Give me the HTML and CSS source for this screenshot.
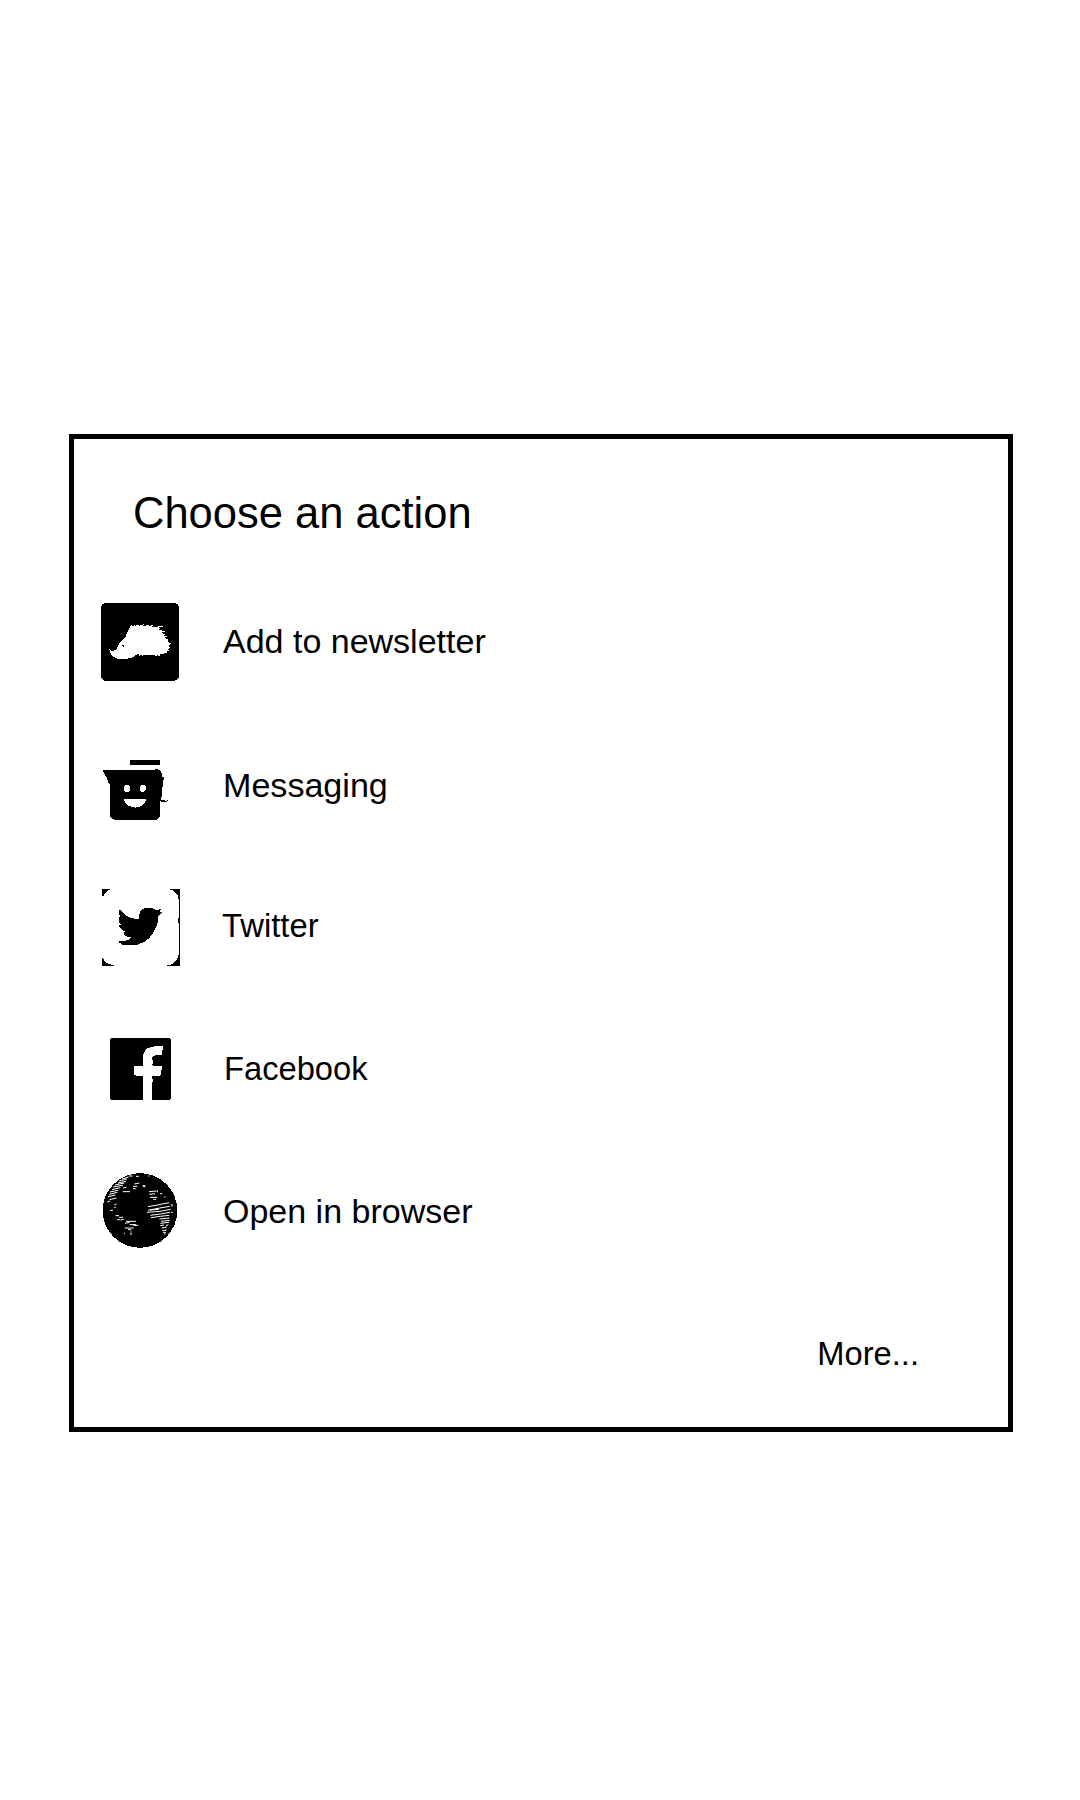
FILE: index.html
```html
<!DOCTYPE html>
<html lang="en">
<head>
<meta charset="utf-8">
<title>Choose an action</title>
<link rel="stylesheet" href="styles.css">
</head>
<body>
<main class="dialog">
  <h1 class="title">Choose an action</h1>
  <ul class="actions">
    <li class="action newsletter">
      <svg class="icon" viewBox="0 3 300 300" aria-hidden="true">
        <path d="M45 39H256L262 42L268 50V262L262 268L255 272H44L38 268L33 261V50L38 42Z"/>
        <path fill="#fff" d="M57 174L63 181L69 184L78 179L84 168L89 158L101 147L107 139L113 124L122 107L126 105L129 111L136 101V108L149 102L147 108L163 102L159 109L178 104L174 109L193 104L186 110L222 109L201 114L213 116L207 119L228 125L213 126L226 134L220 135L235 142L225 142L236 151L231 152L243 161L237 166L240 173L234 178L237 184L229 182L231 190L222 188L220 194L212 191L207 200L203 195L198 200L195 195H162L158 199L154 193L148 198L145 192L138 194L133 199L122 204L105 207H84L75 203L66 197L60 188Z"/>
        <path d="M96 166H102V171H99V168H96Z"/>
      </svg>
      <span>Add to newsletter</span>
    </li>
    <li class="action messaging">
      <svg class="icon" viewBox="0 -30 300 300" aria-hidden="true">
        <path d="M120 45H210V60H120ZM39 75H194V72H201L210 77L216 85V94L222 97V104L218 109L219 122L215 134L216 153L213 157V165H225V168L234 165V169L219 171L211 169L210 213L205 220L198 225H75L67 221L61 214V118L55 113L51 99L43 87Z"/>
        <path fill="#fff" d="M105 121H115L120 126V136L115 141H107L102 136V125ZM154 121H164L168 126V135L163 140H154L149 135V126ZM102 162H168L165 172L158 180L148 185H138V189H134V185H123L112 180L105 173Z"/>
      </svg>
      <span>Messaging</span>
    </li>
    <li class="action twitter">
      <svg class="icon" viewBox="0 3 300 300" aria-hidden="true">
        <path d="M36 42H64L54 46L46 53L40 64H36ZM237 42H270V272H228L241 269L251 265L259 257L264 246L267 234V144H264V129H267V78L264 63L257 53L248 46ZM36 246L42 255L48 262L55 267L72 270V272H36Z"/>
        <path d="M87 104L93 107L101 115L112 124L124 129L143 133H147V119L152 108L160 101L169 98H182L192 101L199 106L213 102L211 108L208 111L216 112L213 117L205 122L203 141L198 157L190 173L178 189L163 201L144 207L142 210H96V207L87 202V198H102L118 193L124 187L107 184L100 174L105 170L95 164L86 153L87 149H94L88 142L86 135V126L91 124L87 117Z"/>
      </svg>
      <span>Twitter</span>
    </li>
    <li class="action facebook">
      <svg class="icon" viewBox="0 -3 300 300" aria-hidden="true">
        <path d="M63 54H237L243 60V234L237 240H186V186H189V177H186V168H210V165H213V150H216V138H189V135H186V132H189V120H186V114L191 108L198 105H216V90H219V78H198L183 81L171 86L164 94L160 104L159 138H132V165H138V168H159V240H64L60 234V58Z"/>
      </svg>
      <span>Facebook</span>
    </li>
    <li class="action browser">
      <svg class="icon" viewBox="0 3 300 300" aria-hidden="true">
        <circle cx="150" cy="151.500" r="112"/>
        <path class="lines" d="M96 57L116 51M87 63L111 57M84 69L108 64M75 75L103 69M69 81L99 76M66 89L91 83M60 96L84 91M58 103L82 97M54 110L76 105M58 119L79 114M52 126L60 123M117 48H128M138 49H147M174 48H178M133 72L148 69M129 79H142M129 86H137M99 84L109 82M98 95H120M158 77H166M159 80H166M177 95L200 93M202 91V97M178 103L195 101M210 101H217M180 112L202 112M190 118H198M222 111H226M73 134L80 132M60 151H69M73 143L78 141M76 167H87M87 172H99M81 179H91M92 180L101 178M108 184H138M105 190L119 187M119 194H138M130 196H145M104 204H131M114 209H124M102 220H105M119 222H126M121 216H125M174 140L202 135L237 128M174 151L204 145L239 139M180 150L207 148M171 157L210 154L242 148M181 166L211 162L240 157M183 173L211 169L238 166M208 177L239 174M213 184L239 181M211 190L237 187M211 197L222 195M228 197L235 194M215 204L230 201M217 211H230M219 217H228M222 222H226M243 157H248M246 132V140"/>
      </svg>
      <span>Open in browser</span>
    </li>
  </ul>
  <button class="more" type="button">More...</button>
</main>
</body>
</html>
```
FILE: styles.css
```css
* {
  box-sizing: border-box;
}

body {
  margin: 0;
  min-height: 1800px;
  padding: 434px 67px 0 69px;
  background: #fff;
  color: #000;
  font-family: "Liberation Sans", Arial, sans-serif;
}

.dialog {
  display: flex;
  flex-direction: column;
  height: 998px;
  padding: 44px 89px 0 16px;
  border: 5px solid #000;
}

.title {
  margin: 0 0 48px 43px;
  font-size: 43.5px;
  font-weight: 400;
  line-height: 60px;
}

.actions {
  display: grid;
  grid-template-rows: 144px 141px 143px 142px 100px;
  margin: 0;
  padding: 0;
  list-style: none;
}

.action {
  display: flex;
  align-items: center;
  gap: 33px;
  height: 100px;
  font-size: 34px;
  line-height: 40px;
}

.messaging {
  font-size: 34.1px;
}

.twitter {
  gap: 32px;
  font-size: 32.8px;
}

.facebook {
  gap: 34px;
  font-size: 32.7px;
}

.icon {
  flex: none;
  width: 100px;
  height: 100px;
  shape-rendering: crispEdges;
}

.lines {
  fill: none;
  stroke: #fff;
  stroke-width: 3;
  shape-rendering: auto;
}

.more {
  align-self: flex-end;
  margin-top: 73px;
  padding: 0;
  border: 0;
  background: none;
  color: inherit;
  font: 32.7px/40px "Liberation Sans", Arial, sans-serif;
}
```
